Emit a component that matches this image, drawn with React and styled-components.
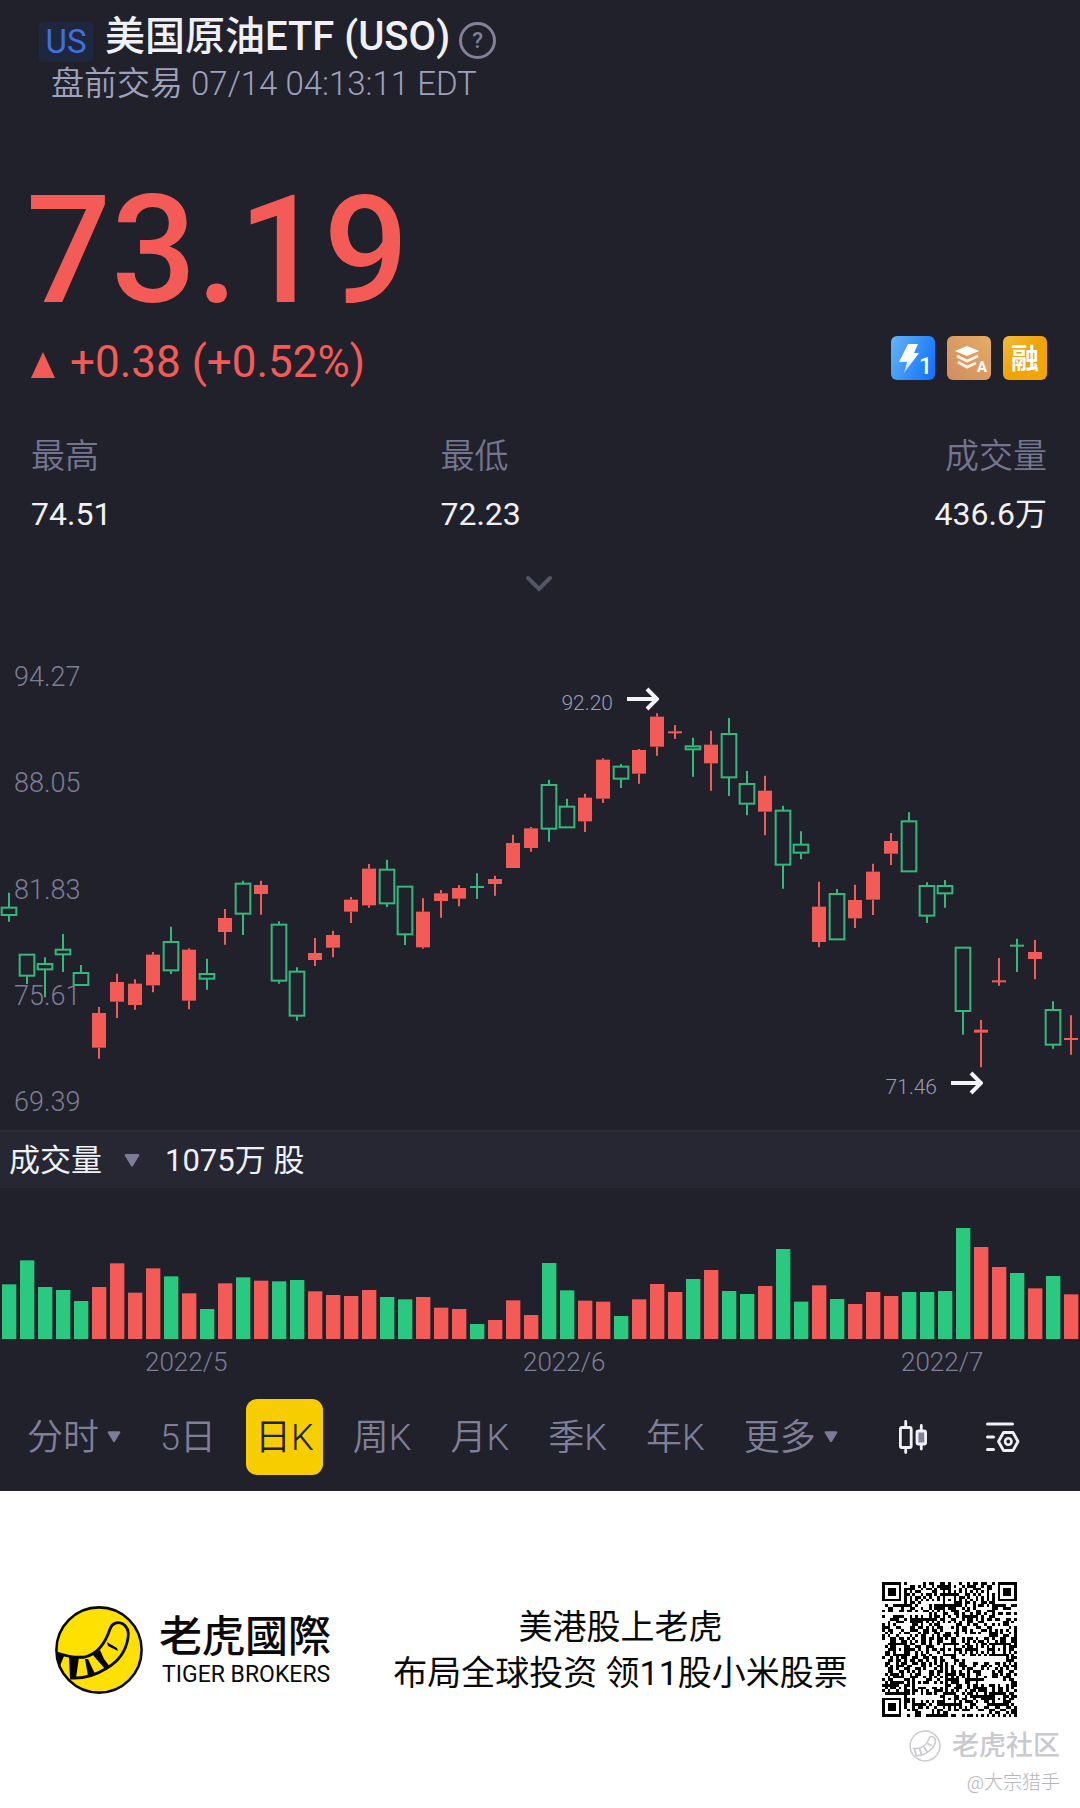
// App.jsx

import React from 'react';
import styled, { createGlobalStyle } from 'styled-components';

const UP = '#f45b57';
const DOWN = '#29c97f';
const DOWN_LINE = '#34b97d';
const BG = '#21212b';

// [direction, high, body top, body bottom, low, volume]
const DAYS = [
    ['d', 698, 741, 767, 785, 164],
    ['d', 882, 882, 949, 972, 236],
    ['d', 892, 910, 930, 1012, 156],
    ['d', 822, 867, 885, 936, 147],
    ['d', 915, 937, 977, 977, 114],
    ['u', 1041, 1059, 1163, 1196, 156],
    ['u', 941, 966, 1025, 1074, 227],
    ['u', 958, 971, 1035, 1049, 139],
    ['u', 876, 884, 976, 997, 212],
    ['d', 800, 844, 933, 942, 188],
    ['u', 865, 869, 1022, 1048, 137],
    ['d', 896, 940, 958, 989, 90],
    ['u', 747, 774, 816, 854, 167],
    ['d', 662, 669, 763, 825, 185],
    ['u', 662, 675, 702, 764, 175],
    ['d', 784, 792, 964, 971, 173],
    ['d', 922, 933, 1069, 1082, 177],
    ['u', 834, 879, 900, 918, 143],
    ['u', 812, 825, 863, 892, 132],
    ['u', 711, 719, 755, 789, 129],
    ['u', 612, 626, 736, 743, 147],
    ['d', 599, 627, 732, 741, 126],
    ['d', 678, 678, 825, 855, 119],
    ['u', 715, 755, 862, 866, 126],
    ['u', 690, 700, 723, 773, 94],
    ['u', 675, 684, 716, 739, 90],
    ['d', 640, 679, 683, 717, 45],
    ['u', 647, 657, 672, 707, 57],
    ['u', 524, 549, 624, 624, 116],
    ['u', 501, 505, 564, 575, 72],
    ['d', 359, 373, 508, 545, 228],
    ['d', 416, 438, 504, 504, 146],
    ['u', 401, 413, 484, 516, 115],
    ['u', 295, 299, 416, 429, 112],
    ['d', 312, 318, 358, 384, 69],
    ['u', 267, 270, 341, 371, 119],
    ['u', 160, 170, 260, 287, 165],
    ['u', 195, 215, 219, 237, 141],
    ['d', 233, 257, 270, 350, 180],
    ['u', 212, 254, 310, 392, 207],
    ['d', 174, 220, 354, 408, 144],
    ['d', 333, 370, 433, 466, 135],
    ['u', 347, 392, 455, 526, 159],
    ['d', 437, 450, 616, 686, 270],
    ['d', 514, 552, 580, 598, 112],
    ['u', 665, 740, 846, 862, 161],
    ['d', 687, 700, 840, 840, 120],
    ['u', 674, 720, 775, 804, 105],
    ['u', 611, 635, 719, 765, 141],
    ['u', 519, 543, 581, 615, 129],
    ['d', 457, 482, 636, 636, 141],
    ['d', 667, 676, 769, 789, 141],
    ['d', 660, 676, 702, 743, 144],
    ['d', 861, 861, 1055, 1124, 333],
    ['u', 1080, 1109, 1118, 1222, 276],
    ['u', 894, 962, 966, 977, 216],
    ['d', 836, 855, 859, 936, 198],
    ['u', 840, 876, 897, 958, 152],
    ['d', 1024, 1048, 1156, 1166, 189],
    ['u', 1066, 1135, 1139, 1184, 134],
];

const STEP = 54;
const CHART_W = STEP * DAYS.length;

const PRICE_TICKS = ['94.27', '88.05', '81.83', '75.61', '69.39'];
const MONTHS = ['2022/5', '2022/6', '2022/7'];
const MARKS = [
    { price: '92.20', index: 36, top: 115 },
    { price: '71.46', index: 54, top: 1265 },
];
const PERIODS = [
    { label: '分时', menu: true },
    { label: '5日' },
    { label: '日K', active: true },
    { label: '周K' },
    { label: '月K' },
    { label: '季K' },
    { label: '年K' },
    { label: '更多', menu: true },
];
const STATS = [
    { label: '最高', value: '74.51' },
    { label: '最低', value: '72.23' },
    { label: '成交量', value: '436.6万' },
];

const Candle = ({ day, x }) => {
    const [dir, high, top, bottom, low] = day;
    const color = dir === 'u' ? UP : DOWN_LINE;
    const flat = bottom - top <= 4;
    return (
        <g stroke={color} strokeWidth="6">
            {high < top && <line x1={x} x2={x} y1={high} y2={top} />}
            {low > bottom && <line x1={x} x2={x} y1={bottom} y2={low} />}
            {flat && <line x1={x - 21} x2={x + 21} y1={top + 2} y2={top + 2} />}
            {!flat && dir === 'u' && (
                <rect x={x - 21} y={top} width="42" height={bottom - top} fill={color} stroke="none" />
            )}
            {!flat && dir === 'd' && (
                <rect x={x - 22} y={top + 2} width="44" height={bottom - top - 4} fill={BG} />
            )}
        </g>
    );
};

const ArrowRight = () => (
    <svg width="32" height="24" viewBox="0 0 32 24" fill="none" stroke="#f2f2f7" strokeWidth="4">
        <path d="M0 12H29M20 2L30 12L20 22" />
    </svg>
);

const PriceChart = () => (
    <ChartBox>
        <ChartSvg viewBox={`0 0 ${CHART_W} 1410`} role="img" aria-label="日K">
            {DAYS.map((day, i) => (
                <Candle key={i} day={day} x={STEP * i + 27} />
            ))}
        </ChartSvg>
        <Ticks>
            {PRICE_TICKS.map(tick => (
                <span key={tick}>{tick}</span>
            ))}
        </Ticks>
        {MARKS.map(({ price, index, top }) => (
            <Mark
                key={price}
                style={{
                    right: `${100 - ((index + 0.5) / DAYS.length) * 100}%`,
                    top: `${(top / 1410) * 100}%`,
                }}
            >
                <span>{price}</span>
                <ArrowRight />
            </Mark>
        ))}
    </ChartBox>
);

const VolumeChart = () => (
    <ChartSvg viewBox={`0 0 ${CHART_W} 456`} role="img" aria-label="成交量">
        {DAYS.map((day, i) => (
            <rect
                key={i}
                x={STEP * i + 6}
                y={453 - day[5]}
                width="43"
                height={day[5]}
                fill={day[0] === 'u' ? UP : DOWN}
            />
        ))}
    </ChartSvg>
);

const FlashBadge = () => (
    <svg width="44" height="44" viewBox="0 0 44 44">
        <defs>
            <linearGradient id="flash" x1="0" y1="0.2" x2="1" y2="0.6">
                <stop offset="0" stopColor="#5fb0f8" />
                <stop offset="1" stopColor="#1576fb" />
            </linearGradient>
            <linearGradient id="bolt" x1="0" y1="0" x2="0" y2="1">
                <stop offset="0.5" stopColor="#fff" />
                <stop offset="1" stopColor="#a9cffc" />
            </linearGradient>
        </defs>
        <rect width="44" height="44" rx="6" fill="url(#flash)" />
        <path d="M17 8H27L23 17H28L13 37L16 26H8Z" fill="url(#bolt)" />
        <BadgeText x="28" y="38" size={23} weight={500}>1</BadgeText>
    </svg>
);

const LayersBadge = () => (
    <svg width="44" height="44" viewBox="0 0 44 44">
        <defs>
            <linearGradient id="layers" x1="0" y1="1" x2="1" y2="0">
                <stop offset="0" stopColor="#d08c62" />
                <stop offset="1" stopColor="#e6ac63" />
            </linearGradient>
        </defs>
        <rect width="44" height="44" rx="6" fill="url(#layers)" />
        <path d="M20 10L32 15L20 20L8 15Z" fill="#fff" />
        <path d="M10 20L20 25L31 20M11 26L20 31L29 27" fill="none" stroke="#fdf0e2" strokeWidth="3" />
        <BadgeText x="30" y="36" size={15} weight={700}>A</BadgeText>
    </svg>
);

const MarginBadge = () => (
    <svg width="44" height="44" viewBox="0 0 44 44">
        <defs>
            <linearGradient id="margin" x1="0" y1="0" x2="1" y2="1">
                <stop offset="0" stopColor="#f3bd3c" />
                <stop offset="0.5" stopColor="#f0a307" />
                <stop offset="1" stopColor="#f3a600" />
            </linearGradient>
        </defs>
        <rect width="44" height="44" rx="6" fill="url(#margin)" />
        <BadgeText x="8" y="33" size={28} weight={700}>融</BadgeText>
    </svg>
);

const CandleIcon = () => (
    <svg width="28" height="34" viewBox="0 0 28 34" fill="none" stroke="#f0f0f5" strokeWidth="2.8" strokeLinecap="round">
        <rect x="1.4" y="7.5" width="10.8" height="20" rx="1.5" />
        <path d="M6.7 1.5V7M6.7 28V32.5M22.3 5.5V10M22.3 25V29" />
        <rect x="18" y="11" width="8.6" height="13" rx="1.5" fill="#81819b" />
    </svg>
);

const SettingsIcon = () => (
    <svg width="34" height="32" viewBox="0 0 34 32" fill="none" stroke="#f0f0f5" strokeWidth="3" strokeLinecap="round">
        <path d="M1.5 3H26.5M1.5 16H7.5M1.5 28.5H7.5" />
        <path d="M17.5 11.5H27L32 20.5L27 29.5H17.5L12.5 20.5Z" strokeWidth="2.8" strokeLinejoin="round" />
        <circle cx="22.3" cy="20.5" r="3.2" strokeWidth="2.6" />
    </svg>
);

const TigerLogo = () => (
    <svg width="88" height="88" viewBox="0 0 88 88">
        <circle cx="44" cy="44" r="42.6" fill="#fee100" stroke="#0a0a0a" strokeWidth="2.6" />
        <path
            d="M2 47C11 50 21 52 30 51C42 48 50 38 55 23C57 17 63 15 68 18C73 21 74 26 73 32C71 44 64 55 52 62C41 69 28 73 15 72"
            fill="none"
            stroke="#0a0a0a"
            strokeWidth="2.8"
        />
        <path d="M2 47L9 50L5 60Z" />
        <path d="M14 51H24L21 72H15Z" />
        <path d="M30 53L33 53L40 68L33 70Z" />
        <path d="M38 49L45 44L49 53L55 61L50 63Z" />
        <path d="M52 36L55 38L62 42L63 45L53 40Z" />
    </svg>
);

const WatermarkLogo = () => (
    <svg width="32" height="32" viewBox="0 0 88 88" fill="none" stroke="#c9c9ce">
        <circle cx="44" cy="44" r="41" strokeWidth="4" />
        <path d="M10 50C34 54 48 46 55 23C57 15 73 16 73 30C71 50 46 71 18 71" strokeWidth="4" />
        <path d="M15 52L20 70M29 52L35 69M41 47L51 61M51 37L62 43" strokeWidth="5" />
    </svg>
);

const QR_SIZE = 49;

const inFinder = (r, c) => {
    const last = QR_SIZE - 8;
    return (r < 8 && c < 8) || (r < 8 && c >= last) || (r >= last && c < 8);
};

const finderOn = (r, c) => {
    const y = r < 8 ? r : r - (QR_SIZE - 7);
    const x = c < 8 ? c : c - (QR_SIZE - 7);
    if (y < 0 || x < 0 || y > 6 || x > 6) return false;
    const ring = Math.max(Math.abs(y - 3), Math.abs(x - 3));
    return ring !== 2;
};

const buildQr = () => {
    const centers = [6, 24, 42];
    let seed = 20220714;
    let d = '';
    for (let r = 0; r < QR_SIZE; r += 1) {
        for (let c = 0; c < QR_SIZE; c += 1) {
            seed = (seed * 1103515245 + 12345) % 2147483648;
            let on = (seed >> 12) % 2 === 0;
            if (r === 6 || c === 6) on = (r + c) % 2 === 0;
            centers.forEach(cy => centers.forEach(cx => {
                const ring = Math.max(Math.abs(r - cy), Math.abs(c - cx));
                if (ring <= 2) on = ring !== 1;
            }));
            if (inFinder(r, c)) on = finderOn(r, c);
            if (on) d += `M${c} ${r}h1v1h-1z`;
        }
    }
    return d;
};

const QR_PATH = buildQr();

const App = () => (
    <>
        <GlobalStyle />
        <Quote>
            <Header>
                <TitleRow>
                    <Market>US</Market>
                    <Title>美国原油ETF (USO)</Title>
                    <HelpButton type="button">?</HelpButton>
                </TitleRow>
                <Session>盘前交易 07/14 04:13:11 EDT</Session>
            </Header>

            <Summary>
                <Price>73.19</Price>
                <ChangeRow>
                    <Change>
                        <Triangle width="24" height="26" viewBox="0 0 24 26">
                            <path d="M12 0L24 26H0Z" />
                        </Triangle>
                        <span>+0.38 (+0.52%)</span>
                    </Change>
                    <Badges>
                        <FlashBadge />
                        <LayersBadge />
                        <MarginBadge />
                    </Badges>
                </ChangeRow>
                <Stats>
                    {STATS.map(({ label, value }) => (
                        <Stat key={label}>
                            <dt>{label}</dt>
                            <dd>{value}</dd>
                        </Stat>
                    ))}
                </Stats>
                <ExpandButton type="button" aria-label="展开">
                    <svg width="28" height="18" viewBox="0 0 28 18" fill="none" stroke="#545565" strokeWidth="4" strokeLinecap="round">
                        <path d="M3 3L14 14L25 3" />
                    </svg>
                </ExpandButton>
            </Summary>

            <PriceChart />

            <VolumeBar>
                <VolumeButton type="button">
                    <Label>成交量</Label>
                    <Caret width="16" height="13" viewBox="0 0 16 13">
                        <path d="M2 0H14Q16 0 15 2L9 12Q8 13 7 12L1 2Q0 0 2 0Z" />
                    </Caret>
                </VolumeButton>
                <Label>1075万 股</Label>
            </VolumeBar>
            <VolumeChart />
            <Months>
                {MONTHS.map(month => (
                    <span key={month}>{month}</span>
                ))}
            </Months>

            <Toolbar>
                <Periods>
                    {PERIODS.map(({ label, menu, active }) => (
                        <Period key={label} type="button" $active={active}>
                            <Label>{label}</Label>
                            {menu && (
                                <Caret width="14" height="12" viewBox="0 0 16 13">
                                    <path d="M2 0H14Q16 0 15 2L9 12Q8 13 7 12L1 2Q0 0 2 0Z" />
                                </Caret>
                            )}
                        </Period>
                    ))}
                </Periods>
                <Tools>
                    <ToolButton type="button" aria-label="K线样式">
                        <CandleIcon />
                    </ToolButton>
                    <ToolButton type="button" aria-label="设置">
                        <SettingsIcon />
                    </ToolButton>
                </Tools>
            </Toolbar>
        </Quote>

        <Footer>
            <BrandRow>
                <TigerLogo />
                <Brand>
                    <BrandName>老虎國際</BrandName>
                    <BrandLatin>TIGER BROKERS</BrandLatin>
                </Brand>
                <Slogan>
                    美港股上老虎
                    <br />
                    布局全球投资 领11股小米股票
                </Slogan>
                <svg width="135" height="135" viewBox={`0 0 ${QR_SIZE} ${QR_SIZE}`} shapeRendering="crispEdges">
                    <path d={QR_PATH} />
                </svg>
            </BrandRow>
            <Watermark>
                <Community>
                    <WatermarkLogo />
                    老虎社区
                </Community>
                <Author>@大宗猎手</Author>
            </Watermark>
        </Footer>
    </>
);

const GlobalStyle = createGlobalStyle`
    body {
        margin: 0;
        background: #fff;
        font-family: Roboto, "Noto Sans CJK SC", sans-serif;
    }

    button {
        padding: 0;
        border: none;
        background: none;
        font-family: inherit;
        cursor: pointer;
    }

    svg {
        display: block;
        flex-shrink: 0;
    }
`;

const Quote = styled.main`
    background: ${BG};
    padding-bottom: 16px;
`;

const Header = styled.header`
    padding: 16px 39px 0;
`;

const TitleRow = styled.div`
    display: flex;
    align-items: flex-end;
    height: 46px;
`;

const Market = styled.span`
    width: 54px;
    border-radius: 4px;
    background: #1f273f;
    color: #3f70dc;
    font-size: 33px;
    line-height: 40px;
    text-align: center;
`;

const Title = styled.h1`
    margin: 0 9px 3px 12px;
    color: #f1f1f5;
    font-size: 40px;
    font-weight: 500;
    line-height: 44px;
    white-space: nowrap;
`;

const HelpButton = styled.button`
    width: 37px;
    height: 37px;
    margin-bottom: 3px;
    border: 3px solid #81819b;
    border-radius: 50%;
    color: #81819b;
    font-size: 22px;
    font-weight: 500;
    line-height: 30px;
`;

const Session = styled.p`
    margin: 2px 0 0 12px;
    color: #9fa1bd;
    font-size: 33px;
    font-weight: 350;
    line-height: 40px;
`;

const Summary = styled.section`
    padding: 0 33px 0 31px;
`;

const Price = styled.div`
    margin: 77px 0 0 -5px;
    color: ${UP};
    font-size: 150px;
    font-weight: 500;
    line-height: 140px;
`;

const ChangeRow = styled.div`
    display: flex;
    justify-content: space-between;
    margin-top: 15px;
`;

const Change = styled.div`
    display: flex;
    align-items: flex-end;
    gap: 15px;
    padding-top: 2px;
    color: ${UP};
    font-size: 44px;
    line-height: 48px;
`;

const Triangle = styled.svg`
    margin-bottom: 8px;
    fill: ${UP};
`;

const Badges = styled.div`
    display: flex;
    gap: 12px;
`;

const BadgeText = styled.text`
    fill: #fff;
    font-size: ${({ size }) => size}px;
    font-weight: ${({ weight }) => weight};
`;

const Stats = styled.dl`
    display: grid;
    grid-template-columns: 27fr 20fr 20fr;
    margin: 50px 0 0;
`;

const Stat = styled.div`
    line-height: 40px;

    &:last-child {
        text-align: right;
    }

    dt {
        color: #74758e;
        font-size: 34px;
        font-weight: 350;
    }

    dd {
        margin: 18px 0 0;
        color: #f1f1f5;
        font-size: 32px;
    }
`;

const ExpandButton = styled.button`
    display: block;
    margin: 35px auto 61px;
    padding: 6px;
`;

const ChartBox = styled.section`
    position: relative;
`;

const ChartSvg = styled.svg`
    width: 100%;
    height: auto;
`;

const Ticks = styled.div`
    position: absolute;
    top: 2px;
    bottom: 13px;
    left: 14px;
    display: flex;
    flex-direction: column;
    justify-content: space-between;
    color: #7d7e96;
    font-size: 27px;
    font-weight: 350;
    line-height: 30px;
`;

const Mark = styled.div`
    position: absolute;
    display: flex;
    gap: 14px;
    margin: -11px -2px 0 0;
    color: #9c9db5;
    font-size: 21px;
    font-weight: 350;
    line-height: 32px;
`;

const Label = styled.span`
    padding-bottom: 6px;
`;

const VolumeBar = styled.div`
    display: flex;
    align-items: center;
    gap: 25px;
    height: 58px;
    padding-left: 9px;
    box-sizing: border-box;
    border-top: 2px solid #2b2b36;
    background: #262732;
    color: #f1f1f5;
    font-size: 31px;
`;

const VolumeButton = styled.button`
    display: flex;
    align-items: center;
    gap: 22px;
    color: inherit;
    font-size: 31px;
`;

const Caret = styled.svg`
    fill: #7b7c98;
`;

const Months = styled.div`
    display: grid;
    grid-template-columns: 35% 35% 30%;
    margin: 7px 0 22px;
    color: #7d7e96;
    font-size: 26px;
    font-weight: 350;
    line-height: 30px;

    span {
        padding-left: 145px;
    }
`;

const Toolbar = styled.nav`
    display: flex;
    align-items: center;
    justify-content: space-between;
    padding: 0 60px 0 18px;
`;

const Periods = styled.div`
    display: flex;
    gap: 21px;
`;

const Period = styled.button`
    display: flex;
    align-items: center;
    gap: 8px;
    height: 76px;
    padding: 0 9px;
    border-radius: 11px;
    background: ${({ $active }) => ($active ? '#f8cd00' : 'none')};
    color: ${({ $active }) => ($active ? '#21212b' : '#7f8098')};
    font-size: 36px;
    font-weight: 350;
    white-space: nowrap;
`;

const Tools = styled.div`
    display: flex;
    align-items: center;
    gap: 59px;
`;

const ToolButton = styled.button`
    display: block;
`;

const Footer = styled.footer`
    padding: 91px 20px 10px 55px;
    background: #fff;
`;

const BrandRow = styled.div`
    display: flex;
    align-items: center;
    padding-right: 43px;
`;

const Brand = styled.div`
    margin-left: 16px;
    color: #0a0a0a;
`;

const BrandName = styled.div`
    font-family: "Noto Sans CJK TC", sans-serif;
    font-size: 43px;
    font-weight: 500;
    line-height: 46px;
`;

const BrandLatin = styled.div`
    margin-top: 4px;
    padding-left: 3px;
    font-size: 23px;
    line-height: 30px;
`;

const Slogan = styled.p`
    flex: 1;
    margin: 0;
    padding-left: 28px;
    color: #0a0a0a;
    font-size: 34px;
    line-height: 46px;
    text-align: center;
    white-space: nowrap;
`;

const Watermark = styled.div`
    display: flex;
    flex-direction: column;
    align-items: flex-end;
    margin-top: 11px;
    color: #c9c9ce;
`;

const Community = styled.div`
    display: flex;
    align-items: center;
    gap: 11px;
    font-size: 27px;
    font-weight: 500;
    line-height: 36px;
`;

const Author = styled.div`
    margin-top: 5px;
    color: #b4b4ba;
    font-size: 19px;
    font-weight: 300;
    line-height: 28px;
`;

export default App;
